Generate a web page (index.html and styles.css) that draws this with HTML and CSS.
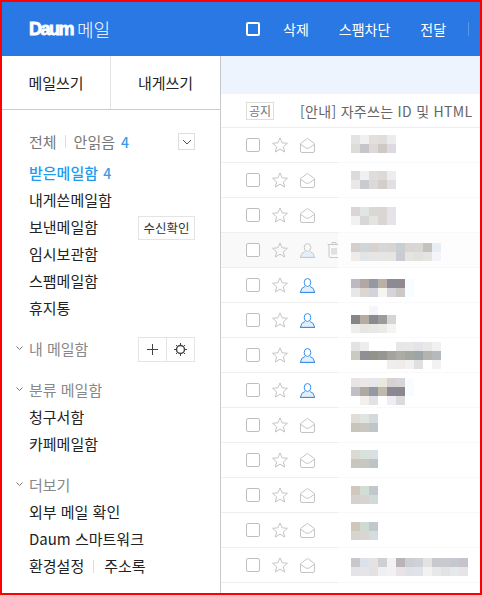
FILE: index.html
```html
<!DOCTYPE html>
<html lang="ko">
<head>
    <meta charset="UTF-8">
    <meta name="viewport" content="width=device-width, initial-scale=1.0">
    <title>Daum 메일</title>
    <link rel="stylesheet" href="styles.css">
</head>
<body>
    <svg class="icon-defs" aria-hidden="true">
        <symbol id="i-star" viewBox="0 0 16 16">
            <path d="M8 .9l2.100 4.900 5.300.5-4 3.500 1.200 5.200L8 12.200l-4.600 2.800 1.200-5.200-4-3.500 5.300-.5z" fill="none" stroke="currentColor"/>
        </symbol>
        <symbol id="i-mail" viewBox="0 0 15 15">
            <path d="M.5 5.600L6.600 1a1.500 1.500 0 0 1 1.800 0l6.100 4.600v7.400a1.500 1.500 0 0 1-1.500 1.500H2A1.500 1.500 0 0 1 .5 13z" fill="none" stroke="currentColor"/>
            <path d="M1 6.500l4.500 3.300q2 1.200 4 0L14 6.500" fill="none" stroke="currentColor"/>
        </symbol>
        <symbol id="i-person" viewBox="0 0 15 15">
            <path class="person-fill" d="M.5 14.500q.5-4.500 4.500-5.500h5q4 1 4.500 5.500z"/>
            <ellipse cx="7.500" cy="4.500" rx="3.300" ry="4" fill="none" stroke="currentColor"/>
            <path d="M5 8.500q-4 1-4.500 5.500M10 8.500q4 1 4.500 5.500" fill="none" stroke="currentColor"/>
            <path d="M0 14.500h15" fill="none" stroke="currentColor" stroke-width="1.300"/>
        </symbol>
        <symbol id="i-trash" viewBox="0 0 14 16">
            <path d="M.5 2.500h13M5 2.500V.5h4v2M2 2.500v12a1 1 0 0 0 1 1h8a1 1 0 0 0 1-1v-12M5 6v6.500M7 6v6.500M9 6v6.500" fill="none" stroke="currentColor"/>
        </symbol>
    </svg>

    <div class="frame">
        <header class="topbar">
            <div class="brand">
                <span class="brand-logo">Daum</span>
                <span class="brand-name">메일</span>
            </div>
            <div class="toolbar">
                <span class="toolbar-check"></span>
                <a class="toolbar-item item-delete">삭제</a>
                <a class="toolbar-item item-spam">스팸차단</a>
                <a class="toolbar-item item-forward">전달</a>
                <span class="toolbar-sep"></span>
            </div>
        </header>

        <div class="layout">
            <aside class="sidebar">
                <div class="write-box">
                    <a class="write-btn">메일쓰기</a>
                    <a class="write-btn">내게쓰기</a>
                </div>

                <div class="filter">
                    <span>전체</span>
                    <span class="filter-sep"></span>
                    <span>안읽음</span>
                    <b class="count">4</b>
                    <button class="filter-toggle">
                        <svg width="10" height="6" viewBox="0 0 10 6"><path d="M1 1l4 4 4-4" fill="none" stroke="#555"/></svg>
                    </button>
                </div>

                <ul class="nav">
                    <li class="nav-active">받은메일함 <b class="count">4</b></li>
                    <li>내게쓴메일함</li>
                    <li class="nav-with-btn">보낸메일함 <button class="small-btn">수신확인</button></li>
                    <li>임시보관함</li>
                    <li>스팸메일함</li>
                    <li>휴지통</li>
                </ul>

                <div class="section-title">
                    <svg class="chevron" width="7" height="5" viewBox="0 0 7 5"><path d="M.5.5l3 3 3-3" fill="none" stroke="#777"/></svg>
                    <span>내 메일함</span>
                    <div class="btn-group">
                        <button class="group-btn">
                            <svg width="13" height="13" viewBox="0 0 13 13"><path d="M6.500 1v11M1 6.500h11" fill="none" stroke="#444"/></svg>
                        </button>
                        <button class="group-btn">
                            <svg width="13" height="13" viewBox="0 0 13 13"><circle cx="6.500" cy="6.500" r="4" fill="none" stroke="#444" stroke-width="1.500"/><path d="M6.500 0v2.500M6.500 10.500V13M0 6.500h2.500M10.500 6.500H13M2 2l1.700 1.700M9.300 9.300L11 11M11 2L9.300 3.700M3.700 9.300L2 11" stroke="#444"/></svg>
                        </button>
                    </div>
                </div>

                <div class="section-title">
                    <svg class="chevron" width="7" height="5" viewBox="0 0 7 5"><path d="M.5.5l3 3 3-3" fill="none" stroke="#777"/></svg>
                    <span>분류 메일함</span>
                </div>
                <ul class="nav">
                    <li>청구서함</li>
                    <li>카페메일함</li>
                </ul>

                <div class="section-title">
                    <svg class="chevron" width="7" height="5" viewBox="0 0 7 5"><path d="M.5.5l3 3 3-3" fill="none" stroke="#777"/></svg>
                    <span>더보기</span>
                </div>
                <ul class="nav">
                    <li>외부 메일 확인</li>
                    <li>Daum 스마트워크</li>
                    <li>환경설정<span class="nav-sep"></span>주소록</li>
                </ul>
            </aside>

            <main class="content">
                <div class="banner"></div>
                <div class="notice">
                    <span class="notice-tag">공지</span>
                    <span class="notice-text">[안내] 자주쓰는 ID 및 HTML</span>
                </div>
                <div id="mailList"></div>
            </main>
        </div>
    </div>

    <script src="app.js"></script>
</body>
</html>
```

FILE: styles.css
```css
* {
    box-sizing: border-box;
}

body {
    margin: 0;
    font-family: "Noto Sans CJK KR", "Noto Sans", sans-serif;
    font-size: 15px;
    color: #222;
    background: #fff;
}

a {
    color: inherit;
    text-decoration: none;
}

ul {
    list-style: none;
    margin: 0;
    padding: 0;
}

button {
    font-family: inherit;
    background: #fff;
    padding: 0;
}

.icon-defs {
    display: none;
}

.frame {
    width: 482px;
    height: 595px;
    border: 2px solid #f00;
    overflow: hidden;
}

/* top bar */
.topbar {
    display: flex;
    height: 54px;
    background: #2a78e4;
    color: #fff;
}

.brand {
    width: 219px;
    display: flex;
    align-items: center;
    padding-left: 27px;
}

.brand-logo {
    width: 48px;
    font-family: "Liberation Sans", sans-serif;
    font-size: 18px;
    font-weight: 700;
    letter-spacing: -1.500px;
    -webkit-text-stroke: 0.8px #fff;
}

.brand-name {
    font-size: 18px;
    font-weight: 300;
    line-height: 24px;
}

.toolbar {
    display: flex;
    align-items: center;
    padding-left: 25px;
}

.toolbar-check {
    width: 14px;
    height: 14px;
    border: 2px solid #fff;
    border-radius: 2px;
}

.toolbar-item {
    font-size: 14px;
    line-height: 18px;
}

.item-delete {
    margin-left: 23px;
}

.item-spam {
    margin-left: 30px;
}

.item-forward {
    margin-left: 30px;
}

.toolbar-sep {
    width: 1px;
    height: 14px;
    margin-left: 22px;
    background: #5a96ea;
}

.layout {
    display: flex;
    height: 537px;
}

/* sidebar */
.sidebar {
    width: 219px;
    flex-shrink: 0;
    border-right: 1px solid #c9c9c9;
    background: #fff;
}

.write-box {
    display: flex;
    height: 54px;
    border-bottom: 1px solid #b9d2e2;
}

.write-btn {
    flex: 1;
    text-align: center;
    line-height: 53px;
    color: #222;
}

.write-btn:first-child {
    flex: none;
    width: 109px;
    border-right: 1px solid #e4e4e4;
}

.filter {
    display: flex;
    align-items: center;
    height: 27px;
    margin-top: 18px;
    padding-left: 27px;
    color: #777;
}

.filter-sep {
    width: 1px;
    height: 13px;
    margin: 0 8px;
    background: #ddd;
}

.count {
    font-weight: 500;
    font-size: 14px;
    color: #3a9be8;
    margin-left: 6px;
}

.filter-toggle {
    width: 17px;
    height: 17px;
    margin-left: auto;
    margin-right: 25px;
    border: 1px solid #ddd;
    display: flex;
    align-items: center;
    justify-content: center;
}

.nav {
    padding-left: 27px;
}

.nav li {
    height: 27px;
    line-height: 27px;
    white-space: nowrap;
}

.filter + .nav {
    margin-top: 4px;
}

.nav .count {
    margin-left: 1px;
}

.nav .nav-active {
    color: #1f9bf0;
    font-weight: 500;
}

.nav-with-btn {
    display: flex;
    align-items: center;
}

.nav-with-btn .small-btn {
    margin-left: auto;
    margin-right: 25px;
    margin-top: 2px;
}

.small-btn {
    width: 57px;
    height: 24px;
    border: 1px solid #e4e4e4;
    font-size: 12.500px;
    line-height: 20px;
    color: #333;
}

.nav-sep {
    display: inline-block;
    width: 1px;
    height: 13px;
    margin: 0 10px 0 9px;
    background: #ddd;
    vertical-align: -1px;
}

.section-title {
    display: flex;
    align-items: center;
    height: 27px;
    margin-top: 14px;
    padding-left: 14px;
    color: #888;
}

.chevron {
    margin-right: 6px;
}

.btn-group {
    display: flex;
    height: 25px;
    margin-left: auto;
    margin-right: 25px;
    margin-top: 2px;
    border: 1px solid #e4e4e4;
}

.group-btn {
    width: 27px;
    border: 0;
    display: flex;
    align-items: center;
    justify-content: center;
}

.group-btn + .group-btn {
    width: 28px;
    border-left: 1px solid #e4e4e4;
}

/* list */
.content {
    flex: 1;
    min-width: 0;
    overflow: hidden;
}

.banner {
    height: 37px;
    background: #eef4fd;
}

.notice {
    display: flex;
    align-items: center;
    height: 35px;
    padding-left: 25px;
    border-top: 1px solid #f4f4f4;
    border-bottom: 1px solid #eee;
    white-space: nowrap;
}

.notice-tag {
    width: 28px;
    height: 18px;
    border: 1px solid #ddd;
    font-size: 12px;
    line-height: 16px;
    text-align: center;
    color: #777;
    flex-shrink: 0;
}

.notice-text {
    margin-left: 26px;
    font-size: 14px;
    letter-spacing: 0.300px;
    color: #666;
}

.row {
    display: flex;
    height: 35px;
}

.row-tools {
    width: 117px;
    flex-shrink: 0;
    display: flex;
    align-items: center;
    padding-left: 25px;
    border-bottom: 1px solid #eee;
}

.row-sender {
    flex: 1;
    border-bottom: 1px solid #f9f9f9;
}

.row-hover .row-tools {
    background: #f9f9f9;
}

.row-hover .row-sender {
    background: #fdfdfd;
}

.check {
    width: 14px;
    height: 14px;
    flex-shrink: 0;
    border: 1px solid #bfbfbf;
    border-radius: 2px;
    background: #fff;
}

.star {
    width: 16px;
    height: 16px;
    margin-left: 12px;
    color: #c4c4c4;
    flex-shrink: 0;
}

.kind {
    width: 15px;
    height: 15px;
    margin-left: 12px;
    color: #c4c4c4;
    flex-shrink: 0;
}

.kind-person {
    color: #3a8fe8;
}

.person-fill {
    fill: #e3effc;
}

.row-hover .person-fill {
    fill: #fff;
}

.row-hover .kind-person {
    color: #c8c8c8;
}

.trash {
    width: 14px;
    height: 16px;
    margin-left: 12px;
    color: #c8c8c8;
    flex-shrink: 0;
}

.mosaic {
    margin-left: 13px;
}

.mosaic-line {
    display: flex;
    height: 9px;
}

.tile {
    width: 9px;
    height: 9px;
    flex-shrink: 0;
}
```

FILE: app.js
```js
// senders are blurred in this view, so each one is a small grid of tiles
const mails = [
    { kind: 'mail', top: 7, tiles: [
        ['#e4e2e2', '#f1f0f1', '#e2dfdd', '#e0dddb', '#ecebee'],
        ['#dedbdb', '#c6c5c9', '#dcd9d6', '#cfc9c5', '#dcdae0']] },
    { kind: 'mail', top: 8, tiles: [
        ['#dcdbdc', '#eef0f2', '#dfdcda', '#dcd9d6', '#eeedee'],
        ['#eae9e8', '#c9cbcf', '#dcdad8', '#d3cecb', '#e0dfe3']] },
    { kind: 'mail', top: 9, tiles: [
        ['#d8d6d7', '#e1e5e6', '#dad7d5', '#d9d6d4', '#e3e3e8'],
        ['#f1f1f0', '#d8d7d8', '#e4e4e1', '#dad6d4', '#e5e4e8']] },
    { kind: 'person', hover: true, top: 10, tiles: [
        ['#d5cecd', '#cfd6da', '#d6d2d0', '#d8d7d7', '#d9d4d2', '#c7cfd1', '#d8d5d2', '#d9d7d4', '#c4c2bc', '#e8edf6'],
        ['#eeeceb', '#e2e5e8', '#e8e5e3', '#e8e6e4', '#e7e5e1', '#c9ccd2', '#e5e4e1', '#e0e2e0', '#e6e4e0', '#f3f5fa']] },
    { kind: 'person', top: 11, tiles: [
        ['#bcbac0', '#b2a7a2', '#9299a3', '#bab0a6', '#8d8a96', '#8e8a90', '#f6fcff'],
        ['#e8e7e8', '#dcd6d2', '#d2d3dc', '#f6f5f0', '#d5d4da', '#ccc8c7', '#f6fcff']] },
    { kind: 'person', top: 3, tiles: [
        [null, null, '#f5f5fb', null, null],
        ['#868686', '#b5ab9f', '#8a8b90', '#9a9c9e', '#d5d5d3'],
        ['#eeeeec', '#e8e6e2', '#e8e8e6', '#ebebea', '#f4f4f3']] },
    { kind: 'person', top: 4, tiles: [
        ['#e4e3e1', '#eeedee', null, null, null, '#e8e6e6', '#e8e8e6', '#e4e4e8', '#e8e8e8', '#f0f2f2'],
        ['#c8ccc0', '#8f8f95', '#92948c', '#979792', '#a4a39f', '#adaba5', '#a4a6a2', '#9ea5a5', '#b5b3b0', '#b5b9bc'],
        [null, null, null, null, '#efeeed', '#eeeceb', '#f2f1ef', '#e0e0e0', null, '#f2f2f2']] },
    { kind: 'person', top: 5, tiles: [
        ['#e6e4e4', '#eae7e5', '#e6e7ea', '#eae7df', '#d6d2d4', '#d8d5d7', '#f6fcff'],
        ['#c0bfc3', '#b0a8a2', '#9299a5', '#c0b8ab', '#8b8894', '#8b8790', '#f6fcff'],
        [null, '#f2f0ed', '#e0e2e5', null, '#eeeef2', '#dcdadc']] },
    { kind: 'mail', top: 6, tiles: [
        ['#e0dcd6', '#dfe5e0', '#d4dadc'],
        ['#c9c5bd', '#c9c7c0', '#c0c5c8']] },
    { kind: 'mail', top: 7, tiles: [
        ['#dcd8d4', '#d8e2dd', '#d8e0e2'],
        ['#c9c6bf', '#c8c8c0', '#bdc4c6']] },
    { kind: 'mail', top: 8, tiles: [
        ['#d0c8bf', '#d2ddd5', '#bfc8cb'],
        ['#d5d1ce', '#d6d4d0', '#d1dadb']] },
    { kind: 'mail', top: 9, tiles: [
        ['#cec7ba', '#cfdad2', '#bfc9cc'],
        ['#d7d4d0', '#d8d6d2', '#d5dcde']] },
    { kind: 'mail', top: 10, tiles: [
        ['#c8c7cb', '#dde2ea', '#e4e2e2', '#cfd0d3', '#f2f2f3', '#b9b2b8', '#cdced4', '#cfd1d8', '#e6e2e2', '#c8c9cf', '#c8cad0', '#c6c8d0', '#c4c4cc'],
        ['#e4e4e6', '#e5e5e8', '#e4e1e2', '#eff0f1', '#f2f2f4', '#e9e3e8', '#dfe2e8', '#e0e3ea', '#f2f2f4', '#e6e8ea', '#e2e3e4', '#e5e8ec', '#e8e4e5']] },
    { kind: 'mail', top: 11, tiles: [] }
];

function useIcon(cls, id) {
    return `<svg class="${cls}"><use href="#${id}"></use></svg>`;
}

function renderMosaic(mail) {
    const lines = mail.tiles.map(line => {
        const tiles = line.map(color =>
            `<span class="tile" style="background:${color || 'transparent'}"></span>`).join('');
        return `<div class="mosaic-line">${tiles}</div>`;
    }).join('');
    return `<div class="mosaic" style="padding-top:${mail.top}px">${lines}</div>`;
}

const list = document.getElementById('mailList');

mails.forEach(mail => {
    const row = document.createElement('div');
    row.className = mail.hover ? 'row row-hover' : 'row';
    const kind = mail.kind === 'person'
        ? useIcon('kind kind-person', 'i-person')
        : useIcon('kind', 'i-mail');
    row.innerHTML = `
        <div class="row-tools">
            <span class="check"></span>
            ${useIcon('star', 'i-star')}
            ${kind}
            ${mail.hover ? useIcon('trash', 'i-trash') : ''}
        </div>
        <div class="row-sender">${renderMosaic(mail)}</div>
    `;
    list.appendChild(row);
});
```
